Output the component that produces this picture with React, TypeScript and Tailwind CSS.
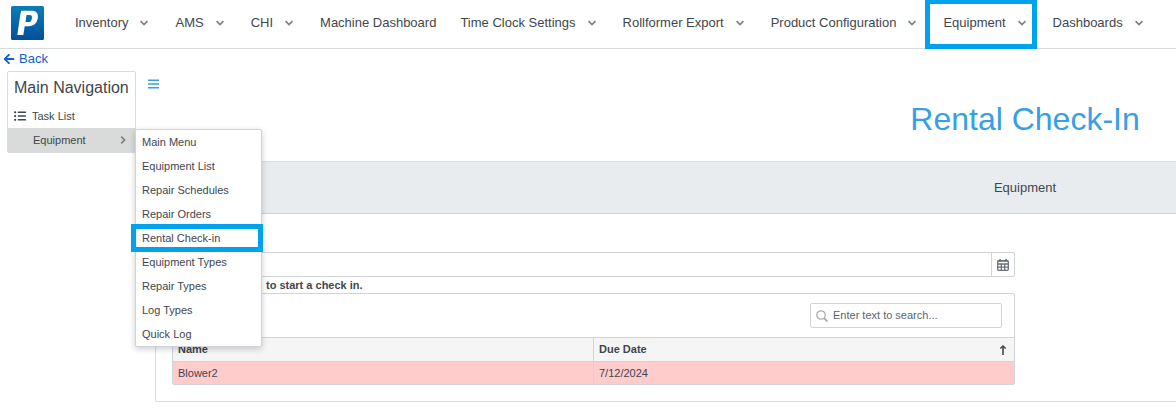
import { useState } from 'react';
import { FaArrowLeft, FaListUl } from 'react-icons/fa';

interface NavItem {
  label: string;
  hasMenu: boolean;
  highlighted?: boolean;
}

const NAV_ITEMS: NavItem[] = [
  { label: 'Inventory', hasMenu: true },
  { label: 'AMS', hasMenu: true },
  { label: 'CHI', hasMenu: true },
  { label: 'Machine Dashboard', hasMenu: false },
  { label: 'Time Clock Settings', hasMenu: true },
  { label: 'Rollformer Export', hasMenu: true },
  { label: 'Product Configuration', hasMenu: true },
  { label: 'Equipment', hasMenu: true, highlighted: true },
  { label: 'Dashboards', hasMenu: true },
];

const EQUIPMENT_MENU = [
  'Main Menu',
  'Equipment List',
  'Repair Schedules',
  'Repair Orders',
  'Rental Check-in',
  'Equipment Types',
  'Repair Types',
  'Log Types',
  'Quick Log',
];

const RENTALS = [{ name: 'Blower2', dueDate: '7/12/2024' }];

const Chevron = ({ className }: { className?: string }) => (
  <svg viewBox="0 0 8 8" className={`h-2 w-2 shrink-0 ${className ?? ''}`} fill="none" stroke="#7b818a" strokeWidth="1.7">
    <path d="M0.6 2.2 L4 5.6 L7.4 2.2" />
  </svg>
);

const Logo = () => (
  <svg viewBox="0 0 33 34" className="h-[34px] w-[33px]" aria-label="Home">
    <defs>
      <linearGradient id="logo-bg" x1="0" y1="0" x2="0" y2="1">
        <stop offset="0" stopColor="#0a7db8" />
        <stop offset="1" stopColor="#04509a" />
      </linearGradient>
    </defs>
    <rect width="33" height="34" rx="1.5" fill="url(#logo-bg)" />
    <path
      fill="#fff"
      fillRule="evenodd"
      d="M10.200 4.800H20.500c5 0 7 2.600 6.300 7.300-.8 5.300-4 8.100-9 8.100h-4.100L12.300 29H6.300L9.200 9.300zM15.500 9l-1 7h2.700c2.300 0 3.300-1.200 3.700-3.600.4-2.400-.3-3.400-2.500-3.400z"
    />
  </svg>
);

const TopNav = () => (
  <header className="flex h-[49px] items-start border-b border-[#d9dcdf] pl-[11px]">
    <a href="#" className="mt-1.5 mr-[19px] shrink-0">
      <Logo />
    </a>
    <nav className="flex">
      {NAV_ITEMS.map((item) => (
        <button key={item.label} className="relative flex h-[46px] items-center whitespace-nowrap px-3 text-[13px]">
          {item.label}
          {item.hasMenu && <Chevron className="mr-[3px] ml-3" />}
          {item.highlighted && <span className="absolute -top-px right-1 -bottom-[3px] -left-1.5 border-5 border-[#00a2ed]" />}
        </button>
      ))}
    </nav>
  </header>
);

const EquipmentFlyout = () => (
  <ul className="absolute top-px left-full z-10 w-[127px] rounded-xs border border-[#ced4da] bg-white shadow-[0_2px_6px_rgba(0,0,0,0.2)]">
    {EQUIPMENT_MENU.map((label) => (
      <li key={label} className="relative">
        <a href="#" className="block h-6 px-1.5 leading-6 text-[11px] whitespace-nowrap">
          {label}
        </a>
        {label === 'Rental Check-in' && <span className="absolute -inset-y-0.5 -right-0.5 -left-[5px] border-5 border-[#00a2ed]" />}
      </li>
    ))}
  </ul>
);

const SideNav = () => (
  <aside className="w-[129px] shrink-0 rounded-xs border border-[#d9dcdf]">
    <h2 className="px-1.5 pt-1 text-[16px] leading-6 whitespace-nowrap">Main Navigation</h2>
    <a href="#" className="mt-1 flex h-6 items-center gap-1.5 px-1.5 text-[11px]">
      <FaListUl className="h-3 w-3" />
      Task List
    </a>
    <div className="relative">
      <button className="flex h-6 w-full items-center justify-between bg-[#d9dada] pr-2 pl-[25px] text-[11px]">
        Equipment
        <Chevron className="-rotate-90" />
      </button>
      <EquipmentFlyout />
    </div>
  </aside>
);

const MenuIcon = () => (
  <svg viewBox="0 0 11 10" className="h-2.5 w-[11px]" fill="currentColor">
    <path d="M0 0.500h11v1.500H0zM0 4.300h11v1.500H0zM0 8.100h11v1.500H0z" />
  </svg>
);

const SearchIcon = () => (
  <svg viewBox="0 0 12 12" className="h-3 w-3 shrink-0" fill="none" stroke="#a9adb1" strokeWidth="1.3">
    <circle cx="5" cy="5" r="4.2" />
    <path d="M8 8l3.500 3.500" strokeWidth="1.8" />
  </svg>
);

const CalendarIcon = () => (
  <svg viewBox="0 0 12 12" className="h-3 w-3" fill="none" stroke="#6c7178" strokeWidth="1.300">
    <rect x="0.7" y="1.700" width="10.600" height="9.600" rx="1" />
    <path d="M0.700 2.200h10.600M0.700 5h10.600M0.700 8.100h10.600M4.300 5v6.300M7.700 5v6.300" />
    <path d="M3 0v2.500M9 0v2.500" strokeWidth="1.600" />
  </svg>
);

const SortIcon = () => (
  <svg viewBox="0 0 8 10" className="h-2.5 w-2" fill="none" stroke="#3f464d" strokeWidth="1.600">
    <path d="M4 1v9" />
    <path d="M1.300 3.600L4 1l2.700 2.600" strokeWidth="1.400" />
  </svg>
);

const RentalTable = () => {
  const [search, setSearch] = useState('');
  const rows = RENTALS.filter((r) => r.name.toLowerCase().includes(search.toLowerCase()));

  return (
    <div className="overflow-hidden rounded-xs border border-[#ced4da]">
      <div className="flex h-[43px] items-start justify-end pt-[9px] pr-3">
        <label className="flex h-[25px] w-48 items-center gap-[5px] rounded-xs border border-[#ced4da] px-[5px]">
          <SearchIcon />
          <input
            type="search"
            aria-label="Search rentals"
            value={search}
            onChange={(e) => setSearch(e.target.value)}
            placeholder="Enter text to search..."
            className="min-w-0 flex-1 text-[11px] outline-none placeholder:text-[#5c656d]"
          />
        </label>
      </div>
      <table className="w-full table-fixed text-left text-[11px]">
        <thead>
          <tr className="h-6 border-y border-[#ced4da] bg-[#f5f5f5]">
            <th className="w-1/2 border-r border-[#ced4da] px-[5px]">Name</th>
            <th className="px-[5px]">
              <div className="flex items-center justify-between pr-0.5">
                Due Date
                <SortIcon />
              </div>
            </th>
          </tr>
        </thead>
        <tbody>
          {rows.map((row) => (
            <tr key={row.name} className="h-[22px] bg-[#ffcccc] leading-5">
              <td className="border-r border-[#ced4da] px-[5px]">{row.name}</td>
              <td className="px-[5px]">{row.dueDate}</td>
            </tr>
          ))}
        </tbody>
      </table>
    </div>
  );
};

const RentalPanel = () => (
  <section className="ml-[7px] rounded-l-xs border border-r-0 border-[#d9dcdf]">
    <div className="flex h-[52px] justify-end border-b border-[#ccd0d4] bg-[#e9ecef]">
      <h2 className="w-[302px] text-center text-[13px] leading-[51px]">Equipment</h2>
    </div>
    <div className="mr-[161px] pt-[38px] pb-4 pl-4">
      <div className="flex h-[25px] rounded-xs border border-[#ced4da]">
        <input type="text" aria-label="Check in date" className="min-w-0 flex-1 px-1.5 text-[11px] outline-none" />
        <button aria-label="Open calendar" className="flex w-[23px] items-center justify-center border-l border-[#ced4da]">
          <CalendarIcon />
        </button>
      </div>
      <p className="pl-[94px] text-[11px] leading-4 font-bold">to start a check in.</p>
      <RentalTable />
    </div>
  </section>
);

export default function App() {
  return (
    <div className="overflow-x-hidden bg-white pb-3.5 font-['Liberation_Sans',Arial,sans-serif] text-[#3f464d]">
      <TopNav />
      <a href="#" className="ml-[3px] flex h-[22px] w-fit items-center gap-1 pb-0.5 text-[13px] leading-5 text-[#0b5ed7]">
        <FaArrowLeft className="h-3 w-3" />
        Back
      </a>
      <div className="flex items-start pl-[7px]">
        <SideNav />
        <main className="min-w-0 flex-1 pl-3">
          <div className="flex h-[90px] items-start justify-between">
            <button aria-label="Toggle navigation" className="pt-2 text-[#35a0e8]">
              <MenuIcon />
            </button>
            <h1 className="w-[302px] pt-7 text-center text-[32px] leading-10 text-[#35a0e8]">Rental Check-In</h1>
          </div>
          <RentalPanel />
        </main>
      </div>
    </div>
  );
}
